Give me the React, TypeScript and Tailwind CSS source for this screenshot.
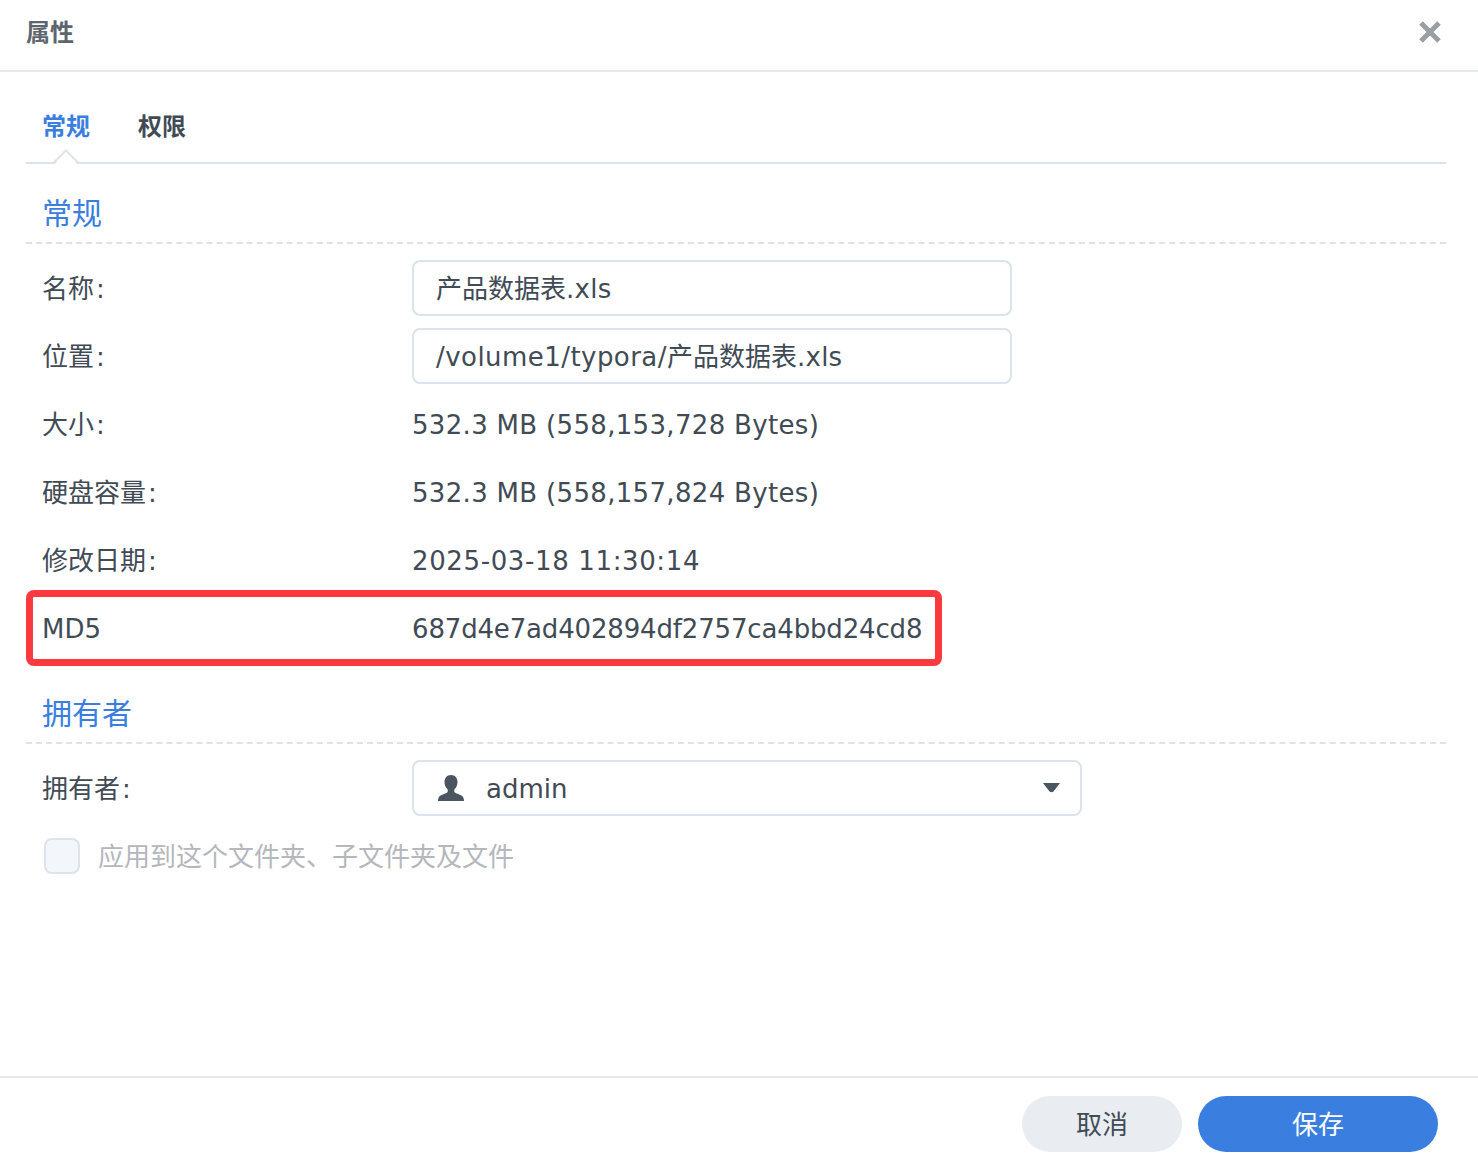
import React from "react";

const font = { fontFamily: '"DejaVu Sans", "Noto Sans CJK SC", sans-serif' };

function Row({ label, colon = true, children }: { label: string; colon?: boolean; children: React.ReactNode }) {
  return (
    <div className="flex h-[68px] items-center pl-4 text-[26px] text-[#414b55]">
      <div className="w-[370px] shrink-0 pt-[2px]">
        {label}
        {colon && <span className="ml-[2px]">:</span>}
      </div>
      {children}
    </div>
  );
}

function Input({ children }: { children: React.ReactNode }) {
  return (
    <div className="flex h-14 w-[600px] items-center rounded-lg border-2 border-[#dde3ea] bg-white pl-[22px] pt-[2px]">
      <span>{children}</span>
    </div>
  );
}

function Section({ title }: { title: string }) {
  return (
    <div className="h-[80px] border-b-2 border-dashed border-[#dde3ea] pl-4 pt-[28px] text-[30px] leading-[44px] text-[#3a7fe0]">
      {title}
    </div>
  );
}

export default function App() {
  return (
    <div className="flex h-[1166px] w-[1478px] flex-col bg-white" style={font}>
      <header className="flex h-[72px] shrink-0 items-center justify-between border-b-2 border-[#e6e9ed] pl-[26px] pr-[36px]">
        <span className="mb-[4px] text-2xl font-bold text-[#5d656e]">属性</span>
        <svg width="24" height="24" viewBox="0 0 24 24" className="mb-[6px]">
          <path d="M3 3 L21 21 M21 3 L3 21" stroke="#9a9ea4" strokeWidth="5" />
        </svg>
      </header>

      <main className="flex-1 pl-[26px] pr-8">
        <nav className="relative flex h-[92px] items-center gap-[48px] border-b-2 border-[#dde3ea] pl-4 text-2xl font-bold">
          <span className="mt-[20px] text-[#3a7fe0]">常规</span>
          <span className="mt-[20px] text-[#414b55]">权限</span>
          <svg width="26" height="15" viewBox="0 0 26 15" className="absolute bottom-[-2px] left-[27px]">
            <path d="M0 13.5 H1 L13 1.5 L25 13.5 H26" fill="none" stroke="#dde3ea" strokeWidth="2" />
            <path d="M2 15 L13 3.5 L24 15 Z" fill="#fff" />
          </svg>
        </nav>

        <Section title="常规" />
        <div className="mt-[10px]">
          <Row label="名称">
            <Input>
              产品数据表<span className="tracking-[0.25px]">.xls</span>
            </Input>
          </Row>
          <Row label="位置">
            <Input>
              <span className="tracking-[0.45px]">/volume1/typora/</span>产品数据表
              <span className="tracking-[0.25px]">.xls</span>
            </Input>
          </Row>
          <Row label="大小">
            <span className="pt-[2px] tracking-[0.32px]">532.3 MB (558,153,728 Bytes)</span>
          </Row>
          <Row label="硬盘容量">
            <span className="pt-[2px] tracking-[0.32px]">532.3 MB (558,157,824 Bytes)</span>
          </Row>
          <Row label="修改日期">
            <span className="pt-[2px] tracking-[0.63px]">2025-03-18 11:30:14</span>
          </Row>
          <div className="relative">
            <Row label="MD5" colon={false}>
              <span className="pt-[2px] tracking-[-0.16px]">687d4e7ad402894df2757ca4bbd24cd8</span>
            </Row>
            <div className="absolute bottom-[-4px] left-0 top-[-4px] w-[916px] rounded-lg border-[7px] border-[#fb3a40]" />
          </div>
        </div>

        <div className="mt-[2px]">
          <Section title="拥有者" />
        </div>
        <div className="mt-[10px]">
          <Row label="拥有者">
            <div className="flex h-14 w-[670px] items-center rounded-lg border-2 border-[#dde3ea] bg-white pl-[23px] pr-[20px]">
              <svg width="28" height="26" viewBox="0 0 28 26" className="shrink-0">
                <path
                  d="M14 0c4 0 6.500 2.800 6.500 7 0 3-1.300 5.800-3.200 7.600v2.200c0 1 3 2 6 3.200 2.500 1 3.700 2.500 3.700 6H1c0-3.500 1.200-5 3.700-6 3-1.200 6-2.200 6-3.200v-2.200C8.800 12.800 7.500 10 7.500 7 7.500 2.800 10 0 14 0z"
                  fill="#4b5560"
                />
              </svg>
              <span className="ml-[21px] flex-1 pt-[2px]">admin</span>
              <svg width="17" height="10" viewBox="0 0 17 10">
                <path d="M0 0 H17 L10.500 8.500 Q8.500 10 6.500 8.500 Z" fill="#4b5560" />
              </svg>
            </div>
          </Row>
          <div className="flex h-[68px] items-center pl-[18px] text-[26px] text-[#b4b7bb]">
            <div className="h-9 w-9 rounded-lg border-2 border-[#dde3ea] bg-[#f3f6fb]" />
            <span className="ml-[18px] pt-[2px]">应用到这个文件夹、子文件夹及文件</span>
          </div>
        </div>
      </main>

      <footer className="flex h-[90px] shrink-0 justify-end gap-4 border-t-2 border-[#e6e9ed] pr-10 pt-[18px]">
        <button className="h-14 w-40 rounded-full bg-[#e9edf1] pt-[2px] text-[26px] text-[#414b55]">取消</button>
        <button className="h-14 w-60 rounded-full bg-[#3a7fe0] pt-[2px] text-[26px] text-white">保存</button>
      </footer>
    </div>
  );
}
